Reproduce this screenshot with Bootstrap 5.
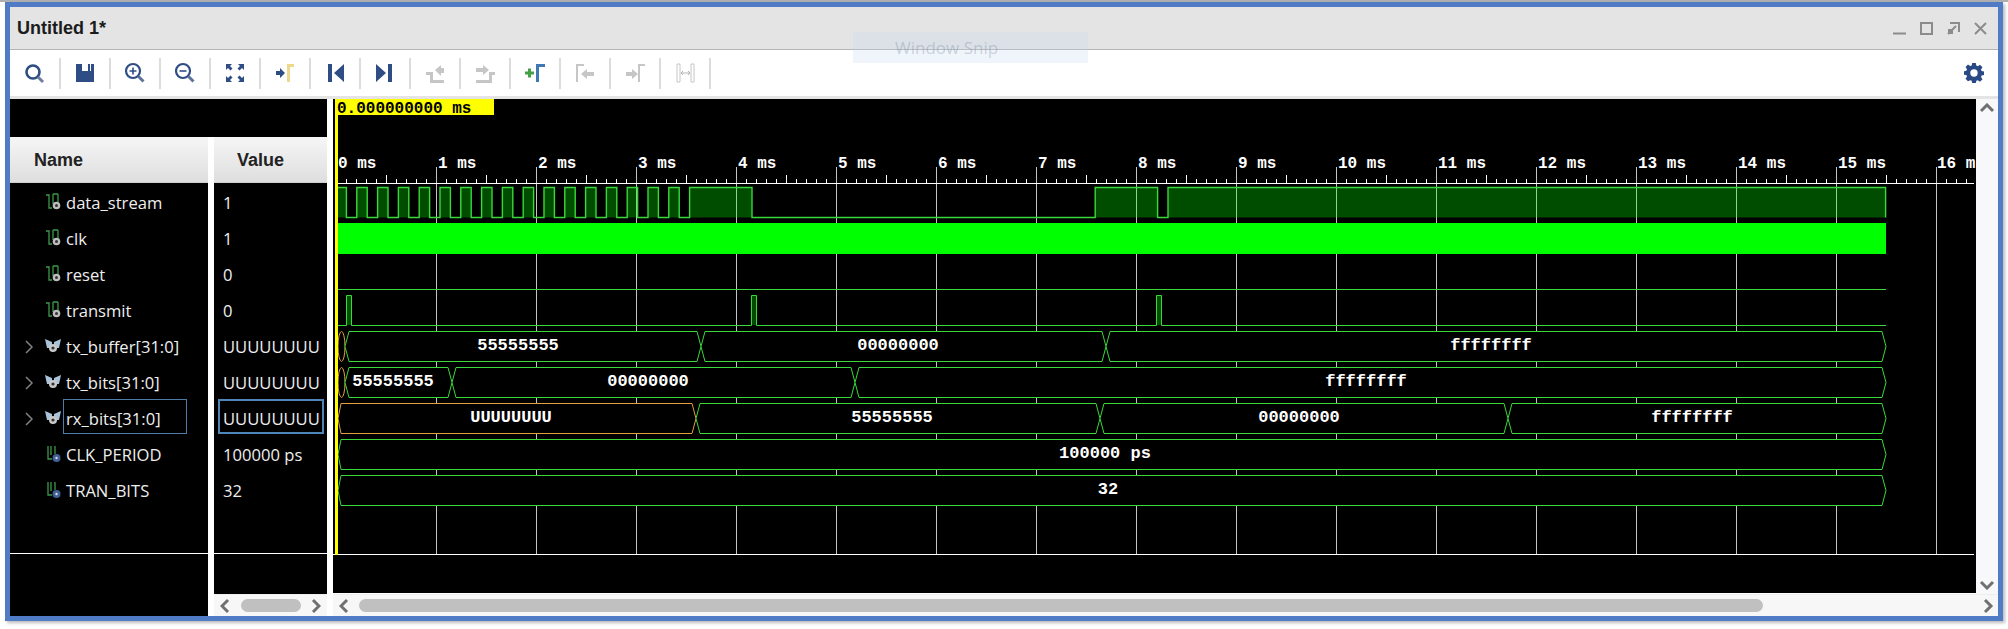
<!DOCTYPE html>
<html lang="en">
<head>
  <meta charset="UTF-8" />
  <title>Untitled 1*</title>
  <link href="https://cdn.jsdelivr.net/npm/bootstrap@5.3.3/dist/css/bootstrap.min.css" rel="stylesheet" />
  <style>
    html, body { height:629px; overflow:hidden; background:#fff; }
    body { border-top:2px solid #aeaeae; }
    .wnd { width:1998px; height:619px; margin-left:5px; border:5px solid #4f7cc4; box-shadow:2px 2px 3px #bbb; position:relative; }
    .title-bar { height:43px; background:#e4e4e4; border-bottom:1px solid #b5b5b5; padding-left:7px; }
    .title-text { font:bold 18px "Liberation Sans", sans-serif; color:#1b1b1b; }
    .win-btns { gap:14px; margin-right:11px; }
    .tool-bar { height:49px; background:#fff; border-bottom:3px solid #e4e4e4; padding-left:1px; }
    .tool-item { width:50px; height:31px; border-right:2px solid #dcdcdc; }
    .gear { margin-right:14px; }
    .main-area { height:517px; }
    .name-col { width:198px; background:#000; }
    .value-col { width:113px; margin-left:6px; }
    .wave-col { width:1665px; margin-left:6px; }
    .pane-black { background:#000; }
    .head-spacer { height:38px; background:#000; }
    .name-col .head-spacer { margin-right:-6px; }
    .head-cell { height:46px; padding-top:2px; background:linear-gradient(#f6f6f6, #dedede); border-bottom:1px solid #cfcfcf; font:bold 18px "Liberation Sans", sans-serif; color:#222; }
    .name-col .head-cell { padding-left:24px; }
    .value-col .head-cell { padding-left:23px; }
    .sig-list { padding-top:1px; height:371px; border-bottom:1px solid #fff; }
    .sig-row { height:36px; font:16.6px "Open Sans", sans-serif; color:#eee; position:relative; }
    .name-col .sig-row { padding-left:56px; }
    .value-col .sig-row { padding-left:9px; }
    .sig-chev { position:absolute; left:15px; top:12px; }
    .sig-icon { position:absolute; left:35px; top:9px; }
    .sig-pick { position:absolute; left:53px; top:-1px; width:124px; height:35px; border:1px solid #4f7ca6; }
    .val-pick { position:absolute; left:4px; top:-1px; width:106px; height:35px; border:2px solid #4f86b8; }
    .wave-svg { display:block; width:1643px; height:494px; background:#000; }
    .wave-svg text { font:bold 16px "Liberation Mono", monospace; fill:#fff; white-space:pre; }
    .wave-svg .bus-text { font-size:17px; }
    .wave-svg .cursor-text { fill:#000; }
    .vbar { width:22px; background:#f8f8fa; }
    .hbar { height:22px; background:#f7f7f7; border-top:1px solid #eee; }
    .value-bar { padding:0 6px; }
    .hthumb { height:13px; background:#c0c0c0; border-radius:7px; }
    .value-thumb { width:60px; }
    .wave-chev { margin-left:6px; margin-right:10px; }
    .wave-thumb { width:1404px; }
    .snip-tip { position:absolute; left:843px; top:25px; width:235px; height:31px; background:rgba(190,215,240,.25); font:17px "Open Sans", sans-serif; color:rgba(110,120,140,.3); padding-left:42px; }
  </style>
</head>
<body>
  <div class="wnd d-flex flex-column">
    <div class="title-bar d-flex align-items-center justify-content-between">
      <span class="title-text">Untitled 1*</span>
      <div class="win-btns d-flex align-items-center">
        <svg width="13" height="13" viewBox="0 0 13 13"><path d="M0 11.5h13" stroke="#8c8c8c" stroke-width="2" /></svg>
        <svg width="13" height="13" viewBox="0 0 13 13"><rect x="1" y="1" width="11" height="11" fill="none" stroke="#8c8c8c" stroke-width="2" /></svg>
        <svg width="13" height="13" viewBox="0 0 13 13" fill="none" stroke="#8c8c8c" stroke-width="2"><path d="M3 1h9v9" /><path d="M9 4 1 12" /><path d="M1 7h5v5H1z" fill="#8c8c8c" stroke="none" /></svg>
        <svg width="13" height="13" viewBox="0 0 13 13"><path d="M1 1l11 11M12 1 1 12" stroke="#8c8c8c" stroke-width="2" /></svg>
      </div>
    </div>

    <div class="tool-bar d-flex align-items-center">
      <div class="tool-item d-flex align-items-center justify-content-center">
        <svg width="24" height="24" viewBox="0 0 24 24" fill="none"><circle cx="10" cy="11" r="6.5" stroke="#2f4d85" stroke-width="2.6" /><path d="M15 16l5 5" stroke="#6d7f9f" stroke-width="3" /></svg>
      </div>
      <div class="tool-item d-flex align-items-center justify-content-center">
        <svg width="24" height="24" viewBox="0 0 24 24"><path d="M3 3h6v7h6V3h2v7h1V3h3v18H3z" fill="#2f4d85" /></svg>
      </div>
      <div class="tool-item d-flex align-items-center justify-content-center">
        <svg width="24" height="24" viewBox="0 0 24 24" fill="none"><circle cx="10" cy="10" r="7" stroke="#2f4d85" stroke-width="2.2" /><path d="M6.5 10h7M10 6.5v7" stroke="#2f4d85" stroke-width="1.6" /><path d="M15.5 15.5l5 5" stroke="#5f7399" stroke-width="3" /></svg>
      </div>
      <div class="tool-item d-flex align-items-center justify-content-center">
        <svg width="24" height="24" viewBox="0 0 24 24" fill="none"><circle cx="10" cy="10" r="7" stroke="#2f4d85" stroke-width="2.2" /><path d="M6.5 10h7" stroke="#2f4d85" stroke-width="1.6" /><path d="M15.5 15.5l5 5" stroke="#5f7399" stroke-width="3" /></svg>
      </div>
      <div class="tool-item d-flex align-items-center justify-content-center">
        <svg width="24" height="24" viewBox="0 0 24 24" fill="#2f4d85"><path d="M3 3h6L7 5l2.500 2.500L7.500 9.500 5 7 3 9zM21 3v6l-2-2-2.500 2.500-2-2L17 5l-2-2zM3 21v-6l2 2 2.500-2.500 2 2L7 19l2 2zM21 21h-6l2-2-2.500-2.500 2-2L19 17l2-2z" /></svg>
      </div>
      <div class="tool-item d-flex align-items-center justify-content-center">
        <svg width="24" height="24" viewBox="0 0 24 24"><path d="M3 10h4V7l5 5-5 5v-3H3z" fill="#2f4d85" /><path d="M14 3h7v3h-4v15h-3z" fill="#ecd98a" /></svg>
      </div>
      <div class="tool-item d-flex align-items-center justify-content-center">
        <svg width="24" height="24" viewBox="0 0 24 24" fill="#2f4d85"><path d="M5 3h4v18H5zM21 3v18l-10-9z" /></svg>
      </div>
      <div class="tool-item d-flex align-items-center justify-content-center">
        <svg width="24" height="24" viewBox="0 0 24 24" fill="#2f4d85"><path d="M15 3h4v18h-4zM3 3v18l10-9z" /></svg>
      </div>
      <div class="tool-item d-flex align-items-center justify-content-center">
        <svg width="24" height="24" viewBox="0 0 24 24" fill="#c6c6c6"><path d="M3 11h7v8h11v3H7v-8H3zM12 9l6-5v3h3v5h-3v3z" /></svg>
      </div>
      <div class="tool-item d-flex align-items-center justify-content-center">
        <svg width="24" height="24" viewBox="0 0 24 24" fill="#c6c6c6"><path d="M3 7h7V4l6 5-6 5v-3H3zM16 11h6v3h-3v8H3v-3h13z" /></svg>
      </div>
      <div class="tool-item d-flex align-items-center justify-content-center">
        <svg width="24" height="24" viewBox="0 0 24 24"><path d="M2 12h9M6.500 7.500v9" stroke="#43a047" stroke-width="3" /><path d="M13 3h9v3h-6v15h-3z" fill="#3f78b5" /></svg>
      </div>
      <div class="tool-item d-flex align-items-center justify-content-center">
        <svg width="24" height="24" viewBox="0 0 24 24" fill="#c6c6c6"><path d="M3 3h8v2H5v16H3zM8 13l6-5v3h7v4h-7v3z" /></svg>
      </div>
      <div class="tool-item d-flex align-items-center justify-content-center">
        <svg width="24" height="24" viewBox="0 0 24 24" fill="#c6c6c6"><path d="M3 11h6V8l6 5-6 5v-3H3zM15 3h7v2h-5v16h-2z" /></svg>
      </div>
      <div class="tool-item d-flex align-items-center justify-content-center">
        <svg width="24" height="24" viewBox="0 0 24 24" fill="none" stroke="#c6c6c6"><path d="M4 3h3v18H4zM18 3h3v18h-3z" /><path d="M8 12h9M10 10l-2 2 2 2M15 10l2 2-2 2" stroke="#b5b5b5" /></svg>
      </div>
      <div class="gear ms-auto d-flex">
        <svg width="20" height="20" viewBox="0 0 20 20"><path fill="#2a4a85" fill-rule="evenodd" d="M8.200 0h3.600l.5 2.600 1.500.6 2.200-1.500 2.500 2.500-1.500 2.200.6 1.500 2.400.5v3.600l-2.400.5-.6 1.500 1.500 2.200-2.500 2.500-2.200-1.500-1.500.6-.5 2.600H8.200l-.5-2.600-1.500-.6L4 18.300l-2.500-2.500L3 13.600l-.6-1.500L0 11.800V8.200l2.400-.5.6-1.500L1.500 4 4 1.500l2.200 1.500 1.500-.6zM10 6.300a3.700 3.700 0 1 0 0 7.400 3.700 3.700 0 0 0 0-7.400z" /></svg>
      </div>
    </div>

    <div class="main-area d-flex">
      <div class="name-col">
        <div class="head-spacer"></div>
        <div class="head-cell d-flex align-items-center">Name</div>
        <div class="sig-list" id="nameList"></div>
      </div>
      <div class="value-col d-flex flex-column">
        <div class="pane-black flex-grow-1">
          <div class="head-spacer"></div>
          <div class="head-cell d-flex align-items-center">Value</div>
          <div class="sig-list" id="valueList"></div>
        </div>
        <div class="hbar value-bar d-flex align-items-center justify-content-between">
          <svg width="10" height="16" viewBox="0 0 10 16"><path d="M8 2 2 8l6 6" fill="none" stroke="#707070" stroke-width="3" /></svg>
          <div class="hthumb value-thumb"></div>
          <svg width="10" height="16" viewBox="0 0 10 16"><path d="M2 2l6 6-6 6" fill="none" stroke="#707070" stroke-width="3" /></svg>
        </div>
      </div>
      <div class="wave-col d-flex flex-column">
        <div class="d-flex flex-grow-1">
          <svg class="wave-svg" id="wave" viewBox="333 99 1643 494"></svg>
          <div class="vbar d-flex flex-column justify-content-between align-items-center py-1">
            <svg width="16" height="10" viewBox="0 0 16 10"><path d="M2 8l6-6 6 6" fill="none" stroke="#707070" stroke-width="3" /></svg>
            <svg width="16" height="10" viewBox="0 0 16 10"><path d="M2 2l6 6 6-6" fill="none" stroke="#707070" stroke-width="3" /></svg>
          </div>
        </div>
        <div class="hbar d-flex align-items-center justify-content-between">
          <svg class="wave-chev" width="10" height="16" viewBox="0 0 10 16"><path d="M8 2 2 8l6 6" fill="none" stroke="#707070" stroke-width="3" /></svg>
          <div class="hthumb wave-thumb me-auto"></div>
          <svg class="me-1" width="12" height="16" viewBox="0 0 12 16"><path d="M3 2l6 6-6 6" fill="none" stroke="#707070" stroke-width="3" /></svg>
        </div>
      </div>
    </div>

    <div class="snip-tip d-flex align-items-center">Window Snip</div>
  </div>

  <script src="https://cdn.jsdelivr.net/npm/bootstrap@5.3.3/dist/js/bootstrap.bundle.min.js"></script>
  <script>
    const signals = [
      { name: "data_stream", value: "1", kind: "logic" },
      { name: "clk", value: "1", kind: "logic" },
      { name: "reset", value: "0", kind: "logic" },
      { name: "transmit", value: "0", kind: "logic" },
      { name: "tx_buffer[31:0]", value: "UUUUUUUU", kind: "bus" },
      { name: "tx_bits[31:0]", value: "UUUUUUUU", kind: "bus" },
      { name: "rx_bits[31:0]", value: "UUUUUUUU", kind: "bus", picked: true },
      { name: "CLK_PERIOD", value: "100000 ps", kind: "param" },
      { name: "TRAN_BITS", value: "32", kind: "param" }
    ];

    const icons = {
      logic: `<svg class="sig-icon" width="17" height="18" viewBox="0 0 17 18" fill="none"><path d="M1 2h3v13h3" stroke="#3a9a4a" stroke-width="1.300" /><path d="M8 1v10M13 1v8M8 1h5" stroke="#3a9a4a" stroke-width="1.300" /><circle cx="11.500" cy="12.500" r="3.800" fill="#bdbdbd" /><circle cx="11.500" cy="12.500" r="1.500" fill="#333" /></svg>`,
      bus: `<svg class="sig-icon" width="17" height="18" viewBox="0 0 17 18"><path d="M0 2l7 3v6H2zM16 2 9 5v6h5z" fill="#a9c3da" /><circle cx="8" cy="11" r="4" fill="#c9c9c9" /><circle cx="8" cy="11" r="1.600" fill="#333" /></svg>`,
      param: `<svg class="sig-icon" width="17" height="18" viewBox="0 0 17 18" fill="none"><path d="M3 1v13h4M6 1v9M10 1v8" stroke="#3a9a4a" stroke-width="1.300" /><circle cx="11.500" cy="13" r="4" fill="#3f5f96" /><circle cx="11.500" cy="13" r="1.200" fill="#ddd" /></svg>`
    };
    const chev = `<svg class="sig-chev" width="9" height="14" viewBox="0 0 9 14"><path d="M1 1l6 6-6 6" fill="none" stroke="#808080" stroke-width="1.500" /></svg>`;

    nameList.innerHTML = signals.map(s => `
      <div class="sig-row d-flex align-items-center">
        ${s.kind === "bus" ? chev : ""}${icons[s.kind]}
        ${s.picked ? '<div class="sig-pick"></div>' : ""}
        <span>${s.name}</span>
      </div>`).join("");

    valueList.innerHTML = signals.map(s => `
      <div class="sig-row d-flex align-items-center">
        ${s.picked ? '<div class="val-pick"></div>' : ""}
        <span>${s.value}</span>
      </div>`).join("");

    // all wave coordinates are page pixels, the viewBox starts at 333,99
    const GREEN = "#3ad83a", ORANGE = "#e2a13c", END = 1886;
    const msX = t => 336 + 100 * t;
    let out = "";

    for (let t = 1; t <= 16; t++) {
      out += `<path d="M${msX(t) + .5} 167V554" stroke="#c4c4c4" />`;
    }
    out += `<path d="M338 183.500H1974M333 554.500H1974" stroke="#fff" />`;
    for (let x = 346; x < 1974; x += 10) {
      const off = x - 336;
      if (off % 100 === 0) continue;
      out += `<path d="M${x + .5} ${off % 50 === 0 ? 175 : 179}V183" stroke="#fff" />`;
    }
    for (let t = 0; t <= 15; t++) {
      out += `<text x="${msX(t) + 2}" y="168">${t} ms</text>`;
    }
    // the pane edge cuts this last label in the original
    out += `<text x="1937" y="168">16 m</text>`;

    // data_stream: 40 bit frames of 10.4px per bit
    const rowTop = i => 187 + 36 * i;
    let highs = [];
    for (let k = 0; k <= 32; k += 2) highs.push([k, k + 1]);
    highs.push([34, 40], [73, 79], [80, 149]);
    const bitX = k => Math.min(336 + 10.4 * k, END);
    const top0 = rowTop(0) + .5, low0 = top0 + 30;
    let path = `M338 ${top0}`;
    highs.forEach(([a, b], i) => {
      const xa = Math.max(bitX(a), 338), xb = bitX(b);
      out += `<rect x="${xa}" y="${top0}" width="${xb - xa}" height="30" fill="#0f0" fill-opacity=".3" />`;
      path += (i ? `L${xa} ${low0}L${xa} ${top0}` : "") + `L${xb} ${top0}L${xb} ${low0}`;
    });
    out += `<path d="${path}" fill="none" stroke="${GREEN}" stroke-width="1.400" />`;

    // clk is too fast to resolve, so it is a solid band
    out += `<rect x="338" y="223" width="${END - 338}" height="31" fill="#0f0" />`;

    // reset and transmit
    const lowLine = i => rowTop(i) + 30.5;
    out += `<path d="M338 ${lowLine(2)}H${END}" stroke="${GREEN}" fill="none" />`;
    let tx = `M338 ${lowLine(3)}`;
    [[346.5, 351.5], [751.5, 756.5], [1156.5, 1161.5]].forEach(([a, b]) => {
      out += `<rect x="${a}" y="${rowTop(3)}" width="${b - a}" height="30" fill="#0f0" fill-opacity=".3" />`;
      tx += `H${a}V${rowTop(3) + .5}H${b}V${lowLine(3)}`;
    });
    out += `<path d="${tx}H${END}" stroke="${GREEN}" fill="none" />`;

    // buses: [from, to, label, label centre, colour]
    const buses = [
      [4, [[345, 701, "55555555", 518], [701, 1106, "00000000", 898], [1106, END, "ffffffff", 1491]]],
      [5, [[345, 452, "55555555", 393], [452, 855, "00000000", 648], [855, END, "ffffffff", 1366]]],
      [6, [[338, 696, "UUUUUUUU", 511, ORANGE], [696, 1100, "55555555", 892], [1100, 1508, "00000000", 1299], [1508, END, "ffffffff", 1692]]],
      [7, [[338, END, "100000 ps", 1105]]],
      [8, [[338, END, "32", 1108]]]
    ];
    buses.forEach(([row, segs]) => {
      const t = rowTop(row) + .5, b = t + 30, m = t + 15;
      if (segs[0][0] === 345) {
        out += `<ellipse cx="341.500" cy="${m}" rx="3.500" ry="15" fill="#000" stroke="${ORANGE}" />`;
      }
      segs.forEach(([x0, x1, label, cx, colour]) => {
        const n = x0 === 338 ? 3 : 4;
        out += `<path d="M${x0} ${m}L${x0 + n} ${t}H${x1 - 4}L${x1} ${m}L${x1 - 4} ${b}H${x0 + n}Z" fill="#000" stroke="${colour || GREEN}" />`;
        out += `<text class="bus-text" x="${cx}" y="${t + 18.5}" text-anchor="middle">${label}</text>`;
      });
    });

    // cursor goes on top of everything
    out += `<rect x="335" y="99" width="3" height="456" fill="#ff0" />`;
    out += `<rect x="335" y="99" width="159" height="16" fill="#ff0" />`;
    out += `<text class="cursor-text" x="337" y="113">0.000000000 ms</text>`;
    wave.innerHTML = out;
  </script>
</body>
</html>
